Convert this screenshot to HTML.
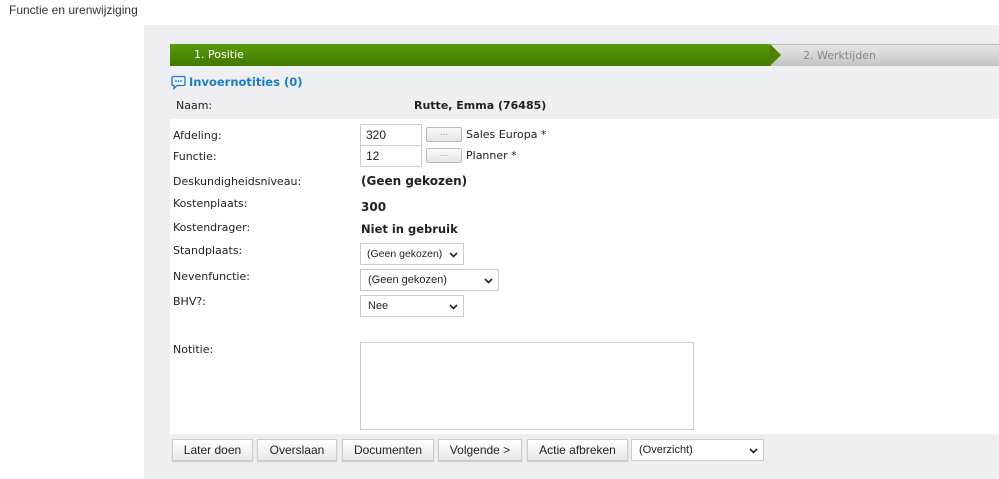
<!DOCTYPE html>
<html><head><meta charset="utf-8"><style>
body{margin:0;width:999px;height:479px;background:#fff;font-family:"DejaVu Sans",Verdana,sans-serif;font-size:11px;color:#222;position:relative;overflow:hidden}
.a{position:absolute}
.title{left:9px;top:3px;font-family:"Liberation Sans",Arial,sans-serif;font-size:12px;color:#333}
.page{left:144px;top:25px;width:855px;height:454px;background:#eeeff3}
.green{left:170px;top:44px;width:600px;height:22px;background:linear-gradient(#5a9a0a,#417a00);color:#fff;font-size:11px;line-height:22px}
.arrow{left:770px;top:44px;width:0;height:0;border-top:11px solid transparent;border-bottom:11px solid transparent;border-left:11px solid #4a8400}
.grey{left:770px;top:44px;width:229px;height:22px;background:linear-gradient(#e6e6e6,#c4c4c4);color:#888;line-height:22px;border-top:1px solid #bbb;box-sizing:border-box}
.form{left:170px;top:119px;width:829px;height:315px;background:#fff}
.lbl{left:173px}
.inp{background:#fff;border:1px solid #ccc;box-sizing:border-box;font-family:"Liberation Sans",Arial,sans-serif;font-size:12px;padding-left:5px}
.dot{border:1px solid #bbb;border-radius:2px;background:linear-gradient(#fafafa,#e6e6e6);width:36px;height:15px;box-sizing:border-box;color:#999;font-size:9px;text-align:center;line-height:11px}
.sel{background:#fff;border:1px solid #ccc;box-sizing:border-box;height:22px;font-family:"Liberation Sans",Arial,sans-serif;font-size:11px;line-height:20px;padding-left:7px;white-space:nowrap}
.sel svg{position:absolute;right:5px;top:8px}
.btn{top:439px;height:22px;border:1px solid #ccc;background:linear-gradient(#fff,#e8e8e8);box-sizing:border-box;font-family:"Liberation Sans",Arial,sans-serif;font-size:12px;text-align:center;line-height:20px;color:#222;box-shadow:0 1px 1px rgba(0,0,0,.15)}
</style></head><body>
<div class="a title">Functie en urenwijziging</div>
<div class="a page"></div>
<div class="a green"><span style="padding-left:24px">1. Positie</span></div>
<div class="a grey"><span style="padding-left:33px">2. Werktijden</span></div>
<div class="a arrow"></div>
<svg class="a" style="left:171px;top:75px" width="15" height="15" viewBox="0 0 15 15"><path d="M2 1.5h11a1 1 0 0 1 1 1v7a1 1 0 0 1-1 1H6l-3 3v-3H2a1 1 0 0 1-1-1v-7a1 1 0 0 1 1-1z" fill="none" stroke="#1a7fc1" stroke-width="1.3"/><circle cx="5" cy="6" r=".9" fill="#1a7fc1"/><circle cx="7.5" cy="6" r=".9" fill="#1a7fc1"/><circle cx="10" cy="6" r=".9" fill="#1a7fc1"/></svg>
<div class="a" style="left:189px;top:75px;color:#1a7fc1;font-weight:bold;font-size:11.5px">Invoernotities (0)</div>
<div class="a" style="left:176px;top:99px">Naam:</div>
<div class="a" style="left:414px;top:99px;font-weight:bold">Rutte, Emma (76485)</div>
<div class="a form"></div>
<div class="a lbl" style="top:129px">Afdeling:</div>
<div class="a lbl" style="top:150px">Functie:</div>
<div class="a lbl" style="top:175px">Deskundigheidsniveau:</div>
<div class="a lbl" style="top:197px">Kostenplaats:</div>
<div class="a lbl" style="top:221px">Kostendrager:</div>
<div class="a lbl" style="top:244px">Standplaats:</div>
<div class="a lbl" style="top:270px">Nevenfunctie:</div>
<div class="a lbl" style="top:295px">BHV?:</div>
<div class="a lbl" style="top:343px">Notitie:</div>
<div class="a inp" style="left:360px;top:124px;width:62px;height:22px;line-height:20px">320</div>
<div class="a inp" style="left:360px;top:145px;width:62px;height:22px;line-height:20px">12</div>
<div class="a dot" style="left:426px;top:127px">...</div>
<div class="a dot" style="left:426px;top:148px">...</div>
<div class="a" style="left:466px;top:128px">Sales Europa *</div>
<div class="a" style="left:466px;top:149px">Planner *</div>
<div class="a" style="left:361px;top:174px;font-weight:bold;font-size:12px">(Geen gekozen)</div>
<div class="a" style="left:361px;top:200px;font-weight:bold;font-size:12px">300</div>
<div class="a" style="left:361px;top:222px;font-weight:bold;font-size:11.5px">Niet in gebruik</div>
<div class="a sel" style="left:360px;top:243px;width:104px;padding-left:6px;font-size:10.5px">(Geen gekozen)<svg width="9" height="6"><path d="M1 1l3.5 3.5L8 1" fill="none" stroke="#222" stroke-width="1.6"/></svg></div>
<div class="a sel" style="left:360px;top:269px;width:139px">(Geen gekozen)<svg width="9" height="6"><path d="M1 1l3.5 3.5L8 1" fill="none" stroke="#222" stroke-width="1.6"/></svg></div>
<div class="a sel" style="left:360px;top:295px;width:104px">Nee<svg width="9" height="6"><path d="M1 1l3.5 3.5L8 1" fill="none" stroke="#222" stroke-width="1.6"/></svg></div>
<div class="a" style="left:360px;top:342px;width:334px;height:88px;border:1px solid #ccc;box-sizing:border-box"></div>
<div class="a btn" style="left:172px;width:81px">Later doen</div>
<div class="a btn" style="left:257px;width:80px">Overslaan</div>
<div class="a btn" style="left:342px;width:92px">Documenten</div>
<div class="a btn" style="left:438px;width:84px">Volgende &gt;</div>
<div class="a btn" style="left:527px;width:101px">Actie afbreken</div>
<div class="a sel" style="left:631px;top:439px;width:133px">(Overzicht)<svg width="9" height="6"><path d="M1 1l3.5 3.5L8 1" fill="none" stroke="#222" stroke-width="1.6"/></svg></div>
</body></html>
